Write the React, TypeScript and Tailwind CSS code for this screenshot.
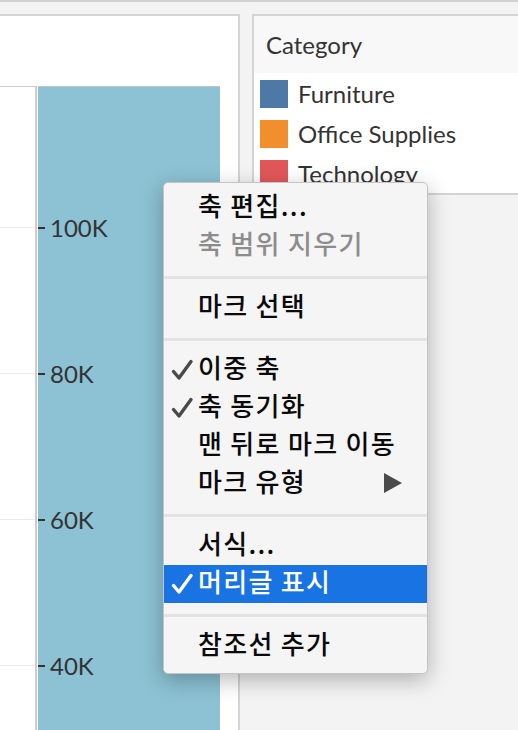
import React from "react";

type MenuEntry =
  | { kind: "sep" }
  | {
      kind: "item";
      label: string;
      checked?: boolean;
      disabled?: boolean;
      active?: boolean;
      submenu?: boolean;
    };

const menuEntries: MenuEntry[] = [
  { kind: "item", label: "축 편집..." },
  { kind: "item", label: "축 범위 지우기", disabled: true },
  { kind: "sep" },
  { kind: "item", label: "마크 선택" },
  { kind: "sep" },
  { kind: "item", label: "이중 축", checked: true },
  { kind: "item", label: "축 동기화", checked: true },
  { kind: "item", label: "맨 뒤로 마크 이동" },
  { kind: "item", label: "마크 유형", submenu: true },
  { kind: "sep" },
  { kind: "item", label: "서식..." },
  { kind: "item", label: "머리글 표시", checked: true, active: true },
  { kind: "sep" },
  { kind: "item", label: "참조선 추가" },
];

const legend = [
  { name: "Furniture", color: "bg-[#4e79a7]" },
  { name: "Office Supplies", color: "bg-[#f28e2b]" },
  { name: "Technology", color: "bg-[#e15759]" },
];

const ticks = ["100K", "80K", "60K", "40K"];

const CheckMark = ({ white }: { white?: boolean }) => (
  <svg width="24" height="24" viewBox="0 0 24 24" className="absolute left-[6px] top-[7px]">
    <path
      d="M3.5 13.5 L9 20 L21 3.5"
      fill="none"
      stroke={white ? "#ffffff" : "#4a4a4a"}
      strokeWidth="3.4"
      strokeLinecap="round"
      strokeLinejoin="round"
    />
  </svg>
);

const ContextMenu = () => (
  <div className="absolute left-[163px] top-[180px] w-[265px] h-[492px] rounded-[5px] bg-[#f5f5f5] border border-[#c4c4c4] shadow-[0_6px_22px_rgba(0,0,0,0.28)] pt-[6px] font-['Noto_Sans_CJK_KR',sans-serif] text-[26px] font-medium tracking-[1.3px]">
    {menuEntries.map((entry, i) =>
      entry.kind === "sep" ? (
        <div key={i} className="pt-[11px] pb-[10px]">
          <div className="h-[3px] bg-[#e3e3e3]" />
        </div>
      ) : (
        <div
          key={i}
          className={`relative h-[38px] flex items-center pl-[34px] leading-none ${
            entry.active
              ? "bg-[#1a73e3] text-white"
              : entry.disabled
              ? "text-[#8c8c8c]"
              : "text-[#0a0a0a]"
          }`}
        >
          {entry.checked && <CheckMark white={entry.active} />}
          <span className="-mt-[7px]">{entry.label}</span>
          {entry.submenu && (
            <svg width="18" height="20" viewBox="0 0 18 20" className="absolute left-[220px] top-[8px]">
              <path d="M0 0 L18 10 L0 20 Z" fill="#4a4a4a" />
            </svg>
          )}
        </div>
      )
    )}
  </div>
);

export default function App() {
  return (
    <div className="relative w-[518px] h-[730px] overflow-hidden bg-[#f3f3f3] border-t-2 border-[#d2d2d2] font-['Lato',sans-serif] text-[#333333]">
      <div className="flex gap-[12px] pt-[12px] h-full">
        {/* chart panel */}
        <div className="w-[240px] h-full bg-white border-t-2 border-r-2 border-[#d4d4d4] flex flex-col">
          <div className="h-[70px] shrink-0" />
          <div className="flex flex-1">
            <div className="relative w-[37px] border-t border-r-2 border-[#cccccc]">
              {ticks.map((t, i) => (
                <div
                  key={t}
                  className="absolute left-0 right-0 h-px bg-[#ebebeb]"
                  style={{ top: 140 + i * 146 }}
                />
              ))}
            </div>
            <div className="w-px" />
            <div className="relative w-[182px] bg-[#8cc2d3] border-t border-[#c4c4c4]">
              {ticks.map((t, i) => (
                <div
                  key={t}
                  className="absolute left-0 flex items-center h-[30px]"
                  style={{ top: 126 + i * 146 }}
                >
                  <div className="w-[7px] h-[2px] bg-[#333333]" />
                  <span className="ml-[5px] text-[24px] leading-none">{t}</span>
                </div>
              ))}
            </div>
          </div>
        </div>

        {/* legend panel */}
        <div className="flex-1 h-[181px] bg-white border-t-2 border-l-2 border-b-2 border-[#d4d4d4] flex flex-col overflow-hidden">
          <div className="h-[57px] shrink-0 bg-[#f8f8f8] pl-[12px] flex items-center text-[24px]">
            Category
          </div>
          <div className="pt-[7px] pl-[6px] flex flex-col gap-[12px]">
            {legend.map((l) => (
              <div key={l.name} className="flex items-center h-[28px]">
                <div className={`w-[28px] h-[28px] ${l.color}`} />
                <span className="ml-[10px] text-[24px] leading-none">{l.name}</span>
              </div>
            ))}
          </div>
        </div>
      </div>
      <ContextMenu />
    </div>
  );
}
